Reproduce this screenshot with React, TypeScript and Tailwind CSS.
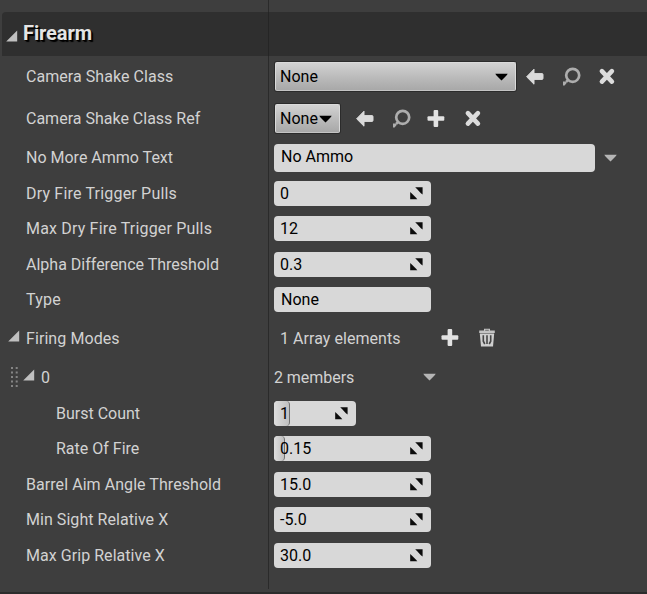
import React from "react";

type Box = { className?: string };

function Expander({ className = "" }: Box) {
  return (
    <svg className={`shrink-0 ${className}`} width="12" height="12" viewBox="0 0 12 12">
      <path d="M11.2 0.4V11.4H0.2Z" fill="#c0c0c0" />
    </svg>
  );
}

function ArrowLeftIcon({ className = "" }: Box) {
  return (
    <svg className={`shrink-0 ${className}`} width="20" height="20" viewBox="0 0 20 20">
      <path
        d="M1.6 9.8L9 2.2V6.6H17Q18 6.6 18 7.6V11.4Q18 12.4 17 12.4H9V17.2Z"
        fill="#dadada"
        stroke="#dadada"
        strokeWidth="1"
        strokeLinejoin="round"
      />
    </svg>
  );
}

function SearchIcon({ className = "" }: Box) {
  return (
    <svg className={`shrink-0 ${className}`} width="20" height="20" viewBox="0 0 20 20" fill="none" stroke="#adadad">
      <circle cx="11.7" cy="8.3" r="6.5" strokeWidth="2.7" />
      <path d="M7.2 12.8L5.2 14.8" strokeWidth="2.6" />
      <path d="M2 14.6H5.6V16L3.6 18.4H2Z" fill="#adadad" stroke="none" />
    </svg>
  );
}

function CrossIcon({ className = "" }: Box) {
  return (
    <svg className={`shrink-0 ${className}`} width="20" height="20" viewBox="0 0 20 20">
      <path d="M4.9 4.2L14.9 14.6M14.9 4.2L4.9 14.6" stroke="#dcdcdc" strokeWidth="4.6" strokeLinecap="round" />
    </svg>
  );
}

function PlusIcon({ className = "" }: Box) {
  return (
    <svg className={`shrink-0 ${className}`} width="20" height="20" viewBox="0 0 20 20" fill="#e2e2e2">
      <rect x="7.6" y="1.1" width="4.6" height="16.8" rx="1" />
      <rect x="1.5" y="7.2" width="16.8" height="4.6" rx="1" />
    </svg>
  );
}

function TrashIcon({ className = "" }: Box) {
  return (
    <svg className={`shrink-0 ${className}`} width="20" height="20" viewBox="0 0 20 20">
      <path d="M2.2 2.6H7V0.8H13V2.6H17.8V5H2.2Z" fill="#c4c4c4" />
      <path d="M8.2 1.8H11.8V2.6H8.2Z" fill="#555" />
      <path d="M2.8 5.6H17.2L16 18.6H4Z" fill="#cfcfcf" />
      <path d="M6.3 7.2V13.2L7.8 16M10 7.2V16M13.7 7.2V13.2L12.2 16" stroke="#454545" strokeWidth="1.6" fill="none" />
    </svg>
  );
}

function Caret({ className = "" }: Box) {
  return (
    <svg className={`shrink-0 ${className}`} width="13" height="8" viewBox="0 0 13 8">
      <path d="M0.3 0.8H12.7Q12 2.2 11 3L6.5 7.6L2 3Q1 2.2 0.3 0.8Z" fill="currentColor" />
    </svg>
  );
}

function SpinIcon({ className = "" }: Box) {
  return (
    <svg className={`shrink-0 ${className}`} width="13" height="13" viewBox="0 0 13 13" fill="#0c0c0c">
      <path d="M5.2 0.3H12.6V7.6L10.9 6.2L7 2Z" />
      <path d="M0.2 5V12.3H7.3L5.8 10.6L1.8 6.6Z" />
    </svg>
  );
}

function Combo({ className = "", children }: Box & { children: React.ReactNode }) {
  return (
    <div
      className={`ml-px flex h-[29px] items-center rounded-[2px] border border-[#dadada] border-b-[#c4c4c4] bg-linear-to-b from-[#d2d2d2] via-[#bcbcbc] to-[#a8a8a8] pl-1 text-black shadow-[0_0_0_1px_#2b2b2b] ${className}`}
    >
      {children}
    </div>
  );
}

function NumberBox({ value, width = "w-[157px]", fill }: { value: string; width?: string; fill?: string }) {
  return (
    <div className={`relative flex h-[25px] items-center justify-between overflow-hidden rounded-[4px] bg-[#d8d8d8] pl-1.5 pr-2 text-black ${width}`}>
      {fill && (
        <div
          className={`absolute inset-y-0 left-0 rounded-r-[4px] border-r border-[#707070] bg-linear-to-r from-[#dedede] to-[#c0c0c0] ${fill}`}
        />
      )}
      <span className="relative">{value}</span>
      <SpinIcon className="relative" />
    </div>
  );
}

function Row({
  h,
  label,
  indent = "pl-[26px]",
  spacing = "",
  lead,
  children,
}: {
  h: string;
  label: string;
  indent?: string;
  spacing?: string;
  lead?: React.ReactNode;
  children: React.ReactNode;
}) {
  return (
    <div className={`flex w-full ${h}`}>
      <div className={`flex w-[269px] shrink-0 items-center border-r border-[#2a2a2a] ${indent}`}>
        {lead}
        <span className={spacing}>{label}</span>
      </div>
      <div className="flex flex-1 items-center pl-[5px]">{children}</div>
    </div>
  );
}

function Grip() {
  return (
    <svg className="mr-[5px] shrink-0" width="8" height="22" viewBox="0 0 8 22" fill="#858585">
      {[1, 5.5, 10, 14.5, 19].map((y) => (
        <React.Fragment key={y}>
          <rect x="1" y={y} width="2" height="2" />
          <rect x="5.7" y={y} width="2" height="2" />
        </React.Fragment>
      ))}
    </svg>
  );
}

export default function App() {
  return (
    <div className="flex h-[594px] w-[647px] flex-col overflow-hidden bg-[#3e3e3e] font-['Roboto',sans-serif] text-[16px] leading-5 whitespace-nowrap text-[#d2d2d2]">
      <div className="h-3 w-[269px] shrink-0 border-r border-[#2a2a2a]" />
      <div className="ml-0.5 flex h-11 shrink-0 rounded-tl-[4px] bg-[#2f2f2f]">
        <div className="flex w-[267px] items-center border-r border-[#252525] pl-1">
          <Expander className="mt-1" />
          <h1 className="-mt-0.5 ml-[5px] text-[20px] font-bold tracking-[-0.1px] text-[#e4e4e4] [text-shadow:1px_1px_0_#000,2px_2px_1px_#000]">
            Firearm
          </h1>
        </div>
      </div>

      <Row h="h-[41px]" label="Camera Shake Class" spacing="tracking-[0.05px]">
        <Combo className="w-[241px] justify-between pr-[7px]">
          <span>None</span>
          <Caret />
        </Combo>
        <ArrowLeftIcon className="ml-[9px]" />
        <SearchIcon className="ml-4" />
        <CrossIcon className="ml-4" />
      </Row>
      <Row h="h-[43px]" label="Camera Shake Class Ref">
        <Combo className="w-[65px] justify-between pr-[7px]">
          <span>None</span>
          <Caret />
        </Combo>
        <ArrowLeftIcon className="ml-[15px]" />
        <SearchIcon className="ml-4" />
        <PlusIcon className="ml-[15px]" />
        <CrossIcon className="ml-[17px]" />
      </Row>
      <Row h="h-9" label="No More Ammo Text">
        <div className="flex h-7 w-[321px] items-center rounded-[4px] bg-[#d8d8d8] pb-0.5 pl-[7px] text-black">No Ammo</div>
        <Caret className="ml-[9px] text-[#b5b5b5]" />
      </Row>
      <Row h="h-[35px]" label="Dry Fire Trigger Pulls" spacing="tracking-[0.19px]">
        <NumberBox value="0" />
      </Row>
      <Row h="h-[35px]" label="Max Dry Fire Trigger Pulls" spacing="tracking-[0.18px]">
        <NumberBox value="12" />
      </Row>
      <Row h="h-[37px]" label="Alpha Difference Threshold">
        <NumberBox value="0.3" />
      </Row>
      <Row h="h-[33px]" label="Type" spacing="tracking-[0.2px]">
        <div className="flex h-[25px] w-[157px] items-center rounded-[4px] bg-[#d8d8d8] pl-[7px] text-black">None</div>
      </Row>
      <Row h="h-11" label="Firing Modes" indent="pl-2" spacing="pt-px tracking-[0.08px]" lead={<Expander className="mr-1.5 -mt-1" />}>
        <span className="ml-1.5 w-[160px] pt-px tracking-[0.05px]">1 Array elements</span>
        <PlusIcon />
        <TrashIcon className="ml-[17px]" />
      </Row>
      <Row
        h="h-[34px]"
        label="0"
        indent="pl-2.5"
        spacing="pt-0.5"
        lead={
          <>
            <Grip />
            <Expander className="mr-1.5 -mt-1" />
          </>
        }
      >
        <span className="w-[149px] pt-0.5 tracking-[-0.05px]">2 members</span>
        <Caret className="text-[#b5b5b5]" />
      </Row>
      <Row h="h-[39px]" label="Burst Count" indent="pl-14">
        <NumberBox value="1" width="w-[82px]" fill="w-4" />
      </Row>
      <Row h="h-[31px]" label="Rate Of Fire" indent="pl-14">
        <NumberBox value="0.15" fill="w-[11px]" />
      </Row>
      <Row h="h-[41px]" label="Barrel Aim Angle Threshold" spacing="tracking-[0.06px]">
        <NumberBox value="15.0" />
      </Row>
      <Row h="h-[29px]" label="Min Sight Relative X" spacing="tracking-[0.05px]">
        <NumberBox value="-5.0" />
      </Row>
      <Row h="h-[43px]" label="Max Grip Relative X" spacing="tracking-[0.05px]">
        <NumberBox value="30.0" />
      </Row>
      <div className="h-3 w-[269px] shrink-0 border-r border-[#2a2a2a]" />
      <div className="mt-[3px] h-0.5 shrink-0 bg-[#2c2c2c]" />
    </div>
  );
}
